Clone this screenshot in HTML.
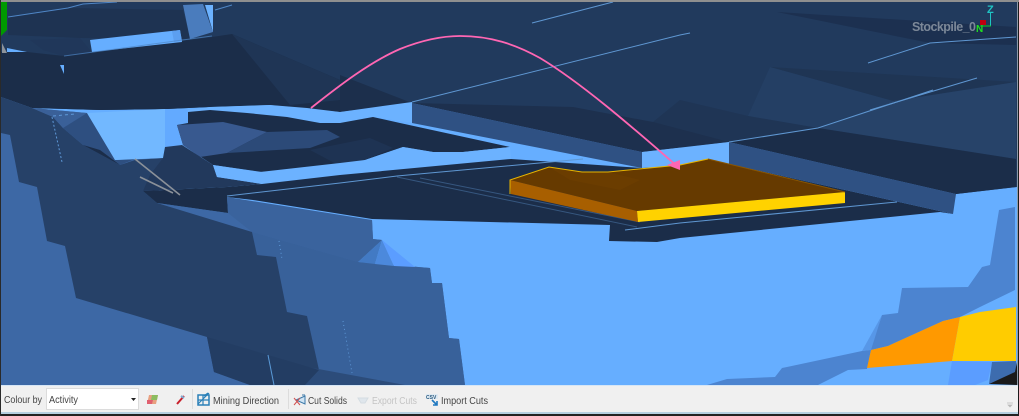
<!DOCTYPE html>
<html><head><meta charset="utf-8">
<style>
html,body{margin:0;padding:0;background:#000}
svg{display:block}
text{font-family:"Liberation Sans",sans-serif}
</style></head>
<body>
<svg width="1019" height="416" viewBox="0 0 1019 416" xmlns="http://www.w3.org/2000/svg">
<rect width="1019" height="416" fill="#1c1c1c"/>
<!-- base light -->
<rect x="1" y="2" width="1016" height="384" fill="#66aeff"/>
<!-- top surface -->
<polygon points="1,2 1017,2 1017,187 956,194 729,142 642,152 412,103 340,112 270,105 210,107 167,109 100,110 32,108 1,97" fill="#213a5d"/>
<polygon points="777,12 1016,27 1016,45 930,43" fill="#1c3050"/>
<polygon points="770,67 1016,82 893,101" fill="#1f3554"/>
<polygon points="770,67 893,101 818,128 748,116" fill="#243f64"/>
<polygon points="893,101 1016,82 1016,159 818,128" fill="#274369"/>
<polygon points="680,100 748,116 818,128 729,142 680,148 653,122" fill="#1f3555"/>
<polygon points="729,142 818,128 1016,159 1016,187 956,194" fill="#1b2d49"/>
<polygon points="412,103 573,107 653,122 729,142 642,152" fill="#1d304e"/>
<polygon points="340,75 412,103 340,112" fill="#1c2f4c"/>
<!-- upper left pieces -->
<polygon points="8,17 68,8 183,10 190,39 80,38 8,35" fill="#1e3352"/>
<polygon points="30,40 80,38 90,50 92,52 64,56 43,50" fill="#20375a"/>
<polygon points="1,52 27,52 64,56 212,37 232,34 340,80 340,112 270,105 210,107 167,109 100,110 32,108 1,97" fill="#1b2d49"/>
<polygon points="232,34 340,80 340,100 290,105" fill="#1f3555"/>
<polygon points="90,40 180,30 182,42 92,52" fill="#66aeff"/>
<polygon points="172,31 180,30 182,41 174,42" fill="#5c9ff0"/>
<polygon points="183,5 203,4 213,32 190,39" fill="#4a7cbd"/>
<polygon points="205,5 213,5 213,32" fill="#6cb2ff"/>
<polygon points="60,65 64,65 64,74" fill="#66aeff"/>
<polygon points="7,48 27,52 7,52" fill="#66aeff"/>
<polyline points="8,17 68,8 83,4 117,2" stroke="#4f86c6" fill="none"/>
<polyline points="64,56 190,39 212,36" stroke="#4f86c6" fill="none" opacity=".7"/>
<polyline points="215,10 232,5" stroke="#4f86c6" fill="none"/>
<polygon points="1,2 7,2 7,30 1,36" fill="#009a00"/>
<polygon points="2,43 7,53 2,53" fill="#8d939a"/>
<!-- left blue -->
<polygon points="1,97 32,108 87,113 116,160 163,158 157,203 228,213 372,220 373,239 382,240 358,262 430,268 432,283 442,283 449,338 459,339 465,385 1,385" fill="#3d68a5"/>
<polygon points="252,232 358,262 430,268 432,283 442,283 449,338 459,339 465,385 305,385 319,370 307,316 287,312 276,257 257,255" fill="#38619a"/>
<polygon points="227,197 372,220 373,239 382,240 358,262 252,232 228,213" fill="#3a639d"/>
<polygon points="382,240 358,262 375,264" fill="#427ac4"/>
<polygon points="382,240 375,264 394,266" fill="#4c89dc"/>
<polygon points="382,240 394,266 415,267" fill="#5b9dff"/>
<polygon points="1,97 32,108 53,117 63,128 83,145 120,165 135,160 163,158 143,191 157,203 252,232 257,255 276,257 287,312 307,316 319,370 305,385 250,385 214,372 207,337 76,298 65,246 47,241 37,187 19,182 10,135 1,133" fill="#264168"/>
<polygon points="302,366 405,385 305,385" fill="#2c4c7a"/>
<polygon points="207,337 319,370 305,385 250,385 214,372" fill="#233d63"/>
<polygon points="32,108 87,113 63,128 53,117" fill="#3a6098"/>
<polygon points="63,128 87,113 115,160 135,159 120,165 83,145" fill="#2e4f80"/>
<polygon points="83,145 120,165 100,150" fill="#1b2d49"/>
<polyline points="52,117 62,162" stroke="#5e98d8" stroke-dasharray="2 2" fill="none"/>
<polyline points="53,116 75,114" stroke="#5e98d8" stroke-dasharray="3 3" fill="none"/>
<polyline points="279,241 282,259" stroke="#5e98d8" stroke-dasharray="1 3" fill="none"/>
<polyline points="343,321 352,373" stroke="#5e98d8" stroke-dasharray="1 3" fill="none"/>
<polyline points="268,355 274,385" stroke="#5a9ad8" fill="none"/>
<!-- bright pool and band -->
<polygon points="87,113 165,109 165,147 163,158 115,160" fill="#72b8ff"/>
<polygon points="165,109 188,110 188,123 177,125 182,145 165,147" fill="#63aaff"/>
<polygon points="188,110 210,107 270,105 307,108 340,112 412,102 412,123 373,117 340,123 320,123 287,117 247,113 210,110 188,112" fill="#6cb2ff"/>
<!-- dark wedge & mid solid -->
<polygon points="188,112 210,110 247,113 287,117 320,123 340,123 373,117 400,123 510,147 463,152 433,152 403,147 365,160 340,166 262,172 213,165 183,145 177,125 188,123" fill="#1b2d49"/>
<polygon points="310,150 370,138 393,148 365,160 340,166" fill="#1e3353"/>
<polygon points="177,125 223,122 267,132 227,153 200,157 183,145" fill="#38598f"/>
<polygon points="267,132 327,130 340,137 310,148 227,153" fill="#2c4a78"/>
<polygon points="163,158 165,147 182,145 213,165 217,177 262,184 227,187 143,191 150,175" fill="#22395c"/>
<polygon points="213,165 260,172 340,163 365,160 403,147 433,152 463,152 510,147 511,159 340,175 262,184 217,177" fill="#6cb2ff"/>
<!-- far walls -->
<polygon points="412,103 642,152 642,168 412,123" fill="#2f5183"/>
<polygon points="642,152 729,142 729,164 642,168" fill="#6cb2ff"/>
<polygon points="143,191 227,187 262,184 340,175 511,159 642,168 729,164 953,214 940,212 680,238 657,242 609,241 610,225 372,219 253,200 227,197 228,213 157,203" fill="#1b2d49"/>
<polygon points="729,142 956,194 953,214 729,164" fill="#2f5183"/>
<!-- light lines -->
<g fill="none" stroke="#5f97d2" stroke-width="1">
<polyline points="227,196 340,183 397,176 583,159"/>
<polyline points="412,102 680,35 690,33"/>
<polyline points="532,23 613,2"/>
<polyline points="868,63 930,43 1016,37"/>
<polyline points="870,110 977,78"/>
<polyline points="729,142 818,128 933,90"/>
<polyline points="625,230 680,223 897,202"/>
<polyline points="397,177 637,227" opacity=".4"/>
<polyline points="420,178 640,222" opacity=".4"/>
</g>
<!-- grey arrow -->
<g stroke="#8b9199" stroke-width="1.6" fill="none">
<polyline points="135,159 180,195"/>
<polyline points="140,177 173,193"/>
</g>
<!-- orange solid -->
<polygon points="510,180 549,167 582,172 608,172 680,165 708,159 845,192 637,211" fill="#663a00"/>
<polygon points="549,167 582,172 608,172 640,180 620,190 570,180" fill="#6b3d00"/>
<polygon points="510,180 637,211 638,222 511,194" fill="#a85f00"/>
<polygon points="637,211 845,192 845,203 638,222" fill="#ffd200"/>
<polyline points="510,194 510,180 549,167 582,172 608,172 680,165 708,159" fill="none" stroke="#e6b400" stroke-width="1"/>
<polyline points="708,159 845,192" fill="none" stroke="#8a5500" stroke-width="1"/>
<!-- pink curve -->
<path d="M311,108 C340,85 370,62 400,49 C420,41 440,36 460,36 C490,36 515,44 540,58 C580,82 630,125 678,167" fill="none" stroke="#ff66b3" stroke-width="1.8"/>
<polygon points="667,165 680,160 680,170" fill="#ff66b3"/>
<!-- bottom right -->
<polygon points="999,210 1015,207 1015,290 980,307 960,317 943,321 888,346 871,350 867,369 848,370 818,385 707,385 727,379 775,377 782,368 787,367 862,351 870,350 882,315 898,313 902,288 968,287 982,267 990,265" fill="#4c84d0"/>
<polygon points="882,315 871,350 862,351" fill="#5797e8"/>
<polygon points="1015,290 1015,307 980,312" fill="#66aeff"/>
<polygon points="871,350 888,346 943,321 960,317 952,361 867,368" fill="#ff9900"/>
<polygon points="960,317 980,312 1016,307 1016,361 952,361" fill="#ffcc00"/>
<polygon points="952,361 992,362 988,380 975,385 948,385" fill="#5b9dff"/>
<polygon points="992,362 1016,361 1016,372 989,384" fill="#3d6cae"/>
<polygon points="989,384 1015,372 1017,362 1017,385" fill="#1a1a1a"/>
<rect x="1017" y="2" width="1" height="384" fill="#8d9aa8"/>
<rect x="0" y="0" width="1019" height="2" fill="#8f8f8f"/>
<rect x="0" y="0" width="1" height="416" fill="#2a2a2a"/>
<!-- axis -->
<text x="912" y="31" font-size="12.5" font-weight="bold" fill="#7c8898" textLength="64" lengthAdjust="spacing">Stockpile_0</text>
<text x="987" y="13" font-size="11" font-weight="bold" fill="#1fc4c4">Z</text>
<path d="M990.500,13V26" fill="none" stroke="#1fc4c4" stroke-width="1"/>
<path d="M980,26H991" fill="none" stroke="#10d020" stroke-width="1"/>
<rect x="980" y="20" width="6" height="5" fill="#c00010"/>
<text x="976" y="32" font-size="10" font-weight="bold" fill="#20e020">N</text>
<!-- toolbar -->
<rect x="1" y="385" width="1017" height="27" fill="#f0f0f0"/>
<rect x="1" y="385" width="1017" height="1" fill="#d6e6f6"/>
<rect x="1" y="412" width="1017" height="2" fill="#b5cfe0"/>
<rect x="1" y="414" width="1018" height="2" fill="#222"/>
<text x="4" y="403" font-size="10" fill="#444" textLength="38" lengthAdjust="spacingAndGlyphs">Colour by</text>
<rect x="46.500" y="388.500" width="92" height="21" fill="#fff" stroke="#dcdcdc"/>
<text x="49" y="403" font-size="10" fill="#444" textLength="29" lengthAdjust="spacingAndGlyphs">Activity</text>
<polygon points="131,398 136,398 133.500,401" fill="#222"/>
<!-- palette icon -->
<polygon points="149,395 158,395 156,404 147,404" fill="#e8a080"/>
<polygon points="152,395 158,395 157,400 151,400" fill="#8cbc60"/>
<polygon points="147,400 153,400 152,404 147,404" fill="#e06070"/>
<!-- pencil icon -->
<path d="M177,404L184,396" stroke="#c8202c" stroke-width="2" fill="none"/>
<path d="M181,396L184,398" stroke="#80a8d0" stroke-width="2" fill="none"/>
<rect x="192" y="389" width="1" height="20" fill="#dcdcdc"/>
<!-- mining direction icon -->
<rect x="198" y="395" width="11" height="10" fill="none" stroke="#2a80b8" stroke-width="1.500"/>
<path d="M198,400H209M203,395V405M198,404L209,393M204,396L208,393" stroke="#2a80b8" stroke-width="1.200" fill="none"/>
<text x="213" y="404" font-size="10" fill="#444" textLength="66" lengthAdjust="spacingAndGlyphs">Mining Direction</text>
<rect x="288" y="389" width="1" height="20" fill="#dcdcdc"/>
<!-- cut solids icon -->
<path d="M296,400L305,396V404ZM302,395L305,395" fill="#cfe4f4" stroke="#3a78a8" stroke-width="1"/>
<path d="M294,398L300,405M300,398L294,405" stroke="#d05050" stroke-width="1" fill="none"/>
<text x="308" y="404" font-size="10" fill="#444" textLength="39" lengthAdjust="spacingAndGlyphs">Cut Solids</text>
<!-- export cuts icon -->
<path d="M358,398H368L365,403H361Z" fill="#dfe6ec" stroke="#d4dce2" stroke-width="1"/>
<text x="372" y="404" font-size="10" fill="#c4c4c4" textLength="45" lengthAdjust="spacingAndGlyphs">Export Cuts</text>
<!-- import cuts icon -->
<rect x="426" y="394" width="12" height="5" fill="#dfeaf2"/>
<text x="426" y="399" font-size="5" font-weight="bold" fill="#2a5a80">CSV</text>
<path d="M432,400L437,405M437,401V405H433" stroke="#1f78c0" stroke-width="1.600" fill="none"/>
<text x="441" y="404" font-size="10" fill="#444" textLength="47" lengthAdjust="spacingAndGlyphs">Import Cuts</text>
<!-- overflow grip -->
<path d="M1007,403H1013M1008,405H1012L1010,407Z" stroke="#bbb" fill="#bbb" stroke-width=".7"/>
</svg>
</body></html>
